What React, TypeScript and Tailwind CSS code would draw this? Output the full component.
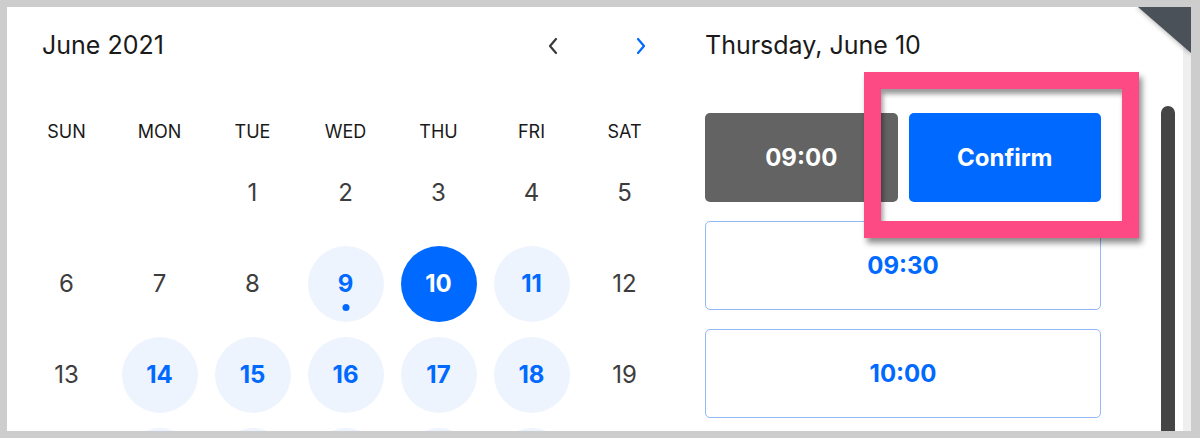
import { Fragment } from "react";

const weekdays = ["SUN", "MON", "TUE", "WED", "THU", "FRI", "SAT"];

// day null = empty cell; hidden = circle only (row cut off by the frame)
type Cell = { day: number | null; available?: boolean; selected?: boolean; dot?: boolean; hidden?: boolean };

const weeks: Cell[][] = [
    [{ day: null }, { day: null }, { day: 1 }, { day: 2 }, { day: 3 }, { day: 4 }, { day: 5 }],
    [
        { day: 6 },
        { day: 7 },
        { day: 8 },
        { day: 9, available: true, dot: true },
        { day: 10, selected: true },
        { day: 11, available: true },
        { day: 12 },
    ],
    [
        { day: 13 },
        { day: 14, available: true },
        { day: 15, available: true },
        { day: 16, available: true },
        { day: 17, available: true },
        { day: 18, available: true },
        { day: 19 },
    ],
    [
        { day: 20, hidden: true },
        { day: 21, available: true, hidden: true },
        { day: 22, available: true, hidden: true },
        { day: 23, available: true, hidden: true },
        { day: 24, available: true, hidden: true },
        { day: 25, available: true, hidden: true },
        { day: 26, hidden: true },
    ],
];

function Chevron({ dir, color }: { dir: "left" | "right"; color: string }) {
    return (
        <svg width="12" height="20" viewBox="0 0 12 20" fill="none">
            <path
                d={dir === "left" ? "M9 3 L3 10 L9 17" : "M3 3 L9 10 L3 17"}
                stroke={color}
                strokeWidth="2.2"
                strokeLinecap="round"
                strokeLinejoin="round"
            />
        </svg>
    );
}

export default function App() {
    return (
        <div
            className="w-[1200px] h-[438px] bg-[#cdcdcd] pt-[7px] pl-[7px] pr-[9px] pb-[7px]"
            style={{ fontFamily: "Inter, 'Open Sans', sans-serif" }}
        >
            <div className="relative w-full h-full bg-white overflow-hidden flex">
                {/* calendar */}
                <div className="w-[698px] shrink-0 pl-[13px]">
                    <div className="w-[651px] h-[78px] flex items-center">
                        <div className="flex-1 pl-[22px] text-[25px] text-[#1a1a1a]">June 2021</div>
                        <div className="flex items-center gap-[76px] mr-[24px]">
                            <Chevron dir="left" color="#3a3a3a" />
                            <Chevron dir="right" color="#0069ff" />
                        </div>
                    </div>
                    <div className="w-[651px] grid grid-cols-7 mt-[33px] h-[24px] items-center">
                        {weekdays.map((d) => (
                            <div key={d} className="text-center text-[18px] text-[#1a1a1a]">
                                {d}
                            </div>
                        ))}
                    </div>
                    <div className="w-[651px] grid grid-cols-7 mt-[5px]">
                        {weeks.map((week, wi) => (
                            <Fragment key={wi}>
                                {week.map((cell, ci) => (
                                    <div key={ci} className="h-[91px] flex items-center justify-center">
                                        {cell.day !== null && (
                                            <div
                                                className={
                                                    cell.selected
                                                        ? "relative w-[76px] h-[76px] rounded-full bg-[#0069ff] text-white font-bold text-[24px] flex items-center justify-center"
                                                        : cell.available
                                                        ? "relative w-[76px] h-[76px] rounded-full bg-[#eef4fe] text-[#0069ff] font-bold text-[24px] flex items-center justify-center"
                                                        : "relative w-[76px] h-[76px] text-[#3d3d3d] text-[24px] flex items-center justify-center"
                                                }
                                            >
                                                {!cell.hidden && cell.day}
                                                {cell.dot && (
                                                    <span className="absolute left-1/2 -translate-x-1/2 top-[58px] w-[7px] h-[7px] rounded-full bg-[#0069ff]" />
                                                )}
                                            </div>
                                        )}
                                    </div>
                                ))}
                            </Fragment>
                        ))}
                    </div>
                </div>

                {/* time slots */}
                <div className="w-[396px] shrink-0">
                    <div className="h-[78px] flex items-center text-[25px] text-[#1a1a1a]">Thursday, June 10</div>
                    <div className="mt-[28px] flex flex-col gap-[19px]">
                        <div className="flex gap-[11px] h-[89px]">
                            <div className="flex-1 rounded-[5px] bg-[#636363] text-white font-bold text-[24px] flex items-center justify-center">
                                09:00
                            </div>
                            <div className="flex-1 rounded-[5px] bg-[#0069ff] text-white font-bold text-[24px] flex items-center justify-center">
                                Confirm
                            </div>
                        </div>
                        {["09:30", "10:00"].map((t) => (
                            <div
                                key={t}
                                className="h-[89px] shrink-0 rounded-[5px] border border-[#93b9f6] text-[#0069ff] font-bold text-[24px] flex items-center justify-center"
                            >
                                {t}
                            </div>
                        ))}
                    </div>
                </div>

                {/* scrollbar */}
                <div className="absolute left-[1154px] top-[99px] bottom-0 w-[14px] rounded-t-full bg-[#454545]" />
                <div className="absolute right-0 top-0 bottom-0 w-[8px] bg-[#efefef]" />

                {/* highlight frame */}
                <div className="absolute left-[857px] top-[65px] w-[275px] h-[166px] border-[17px] border-[#fd4a85] shadow-[3px_5px_6px_rgba(0,0,0,0.45),inset_2px_5px_5px_rgba(0,0,0,0.4)]" />

                {/* folded corner */}
                <svg className="absolute right-0 top-0" width="56" height="50" viewBox="0 0 56 50">
                    <defs>
                        <filter id="blur" x="-20%" y="-20%" width="140%" height="140%">
                            <feGaussianBlur stdDeviation="2" />
                        </filter>
                    </defs>
                    <polygon points="1,0 56,0 56,48" fill="rgba(0,0,0,0.25)" filter="url(#blur)" />
                    <polygon points="3,0 56,0 56,46" fill="#4a5159" />
                </svg>
            </div>
        </div>
    );
}
